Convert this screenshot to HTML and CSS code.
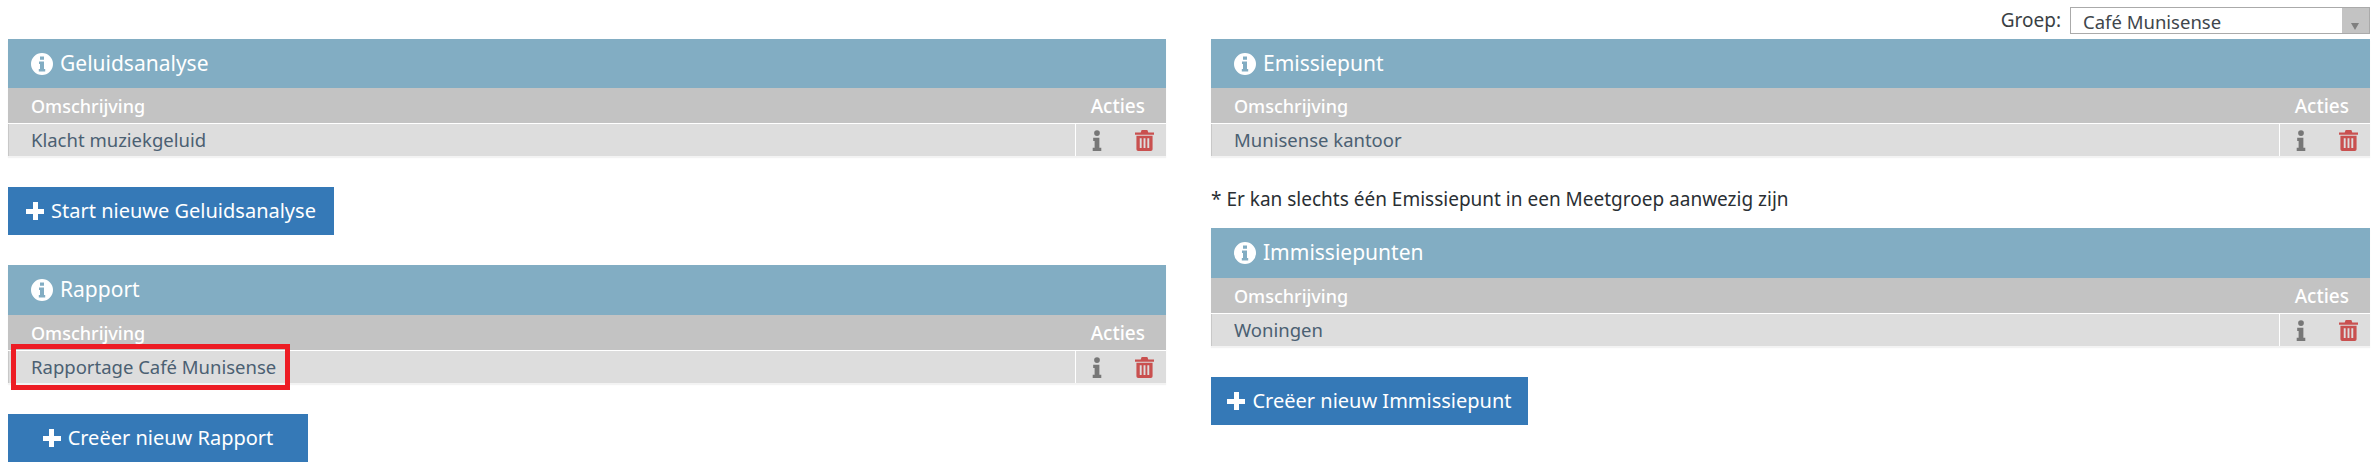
FILE: index.html
```html
<!DOCTYPE html>
<html lang="nl">
<head>
<meta charset="utf-8">
<title>Meetgroep</title>
<link rel="stylesheet" href="styles.css">
</head>
<body>
<svg class="defs" width="0" height="0" aria-hidden="true">
  <symbol id="i-circle" viewBox="0 0 24 24">
    <path fill-rule="evenodd" d="M12 1a11 11 0 1 0 0 22 11 11 0 0 0 0-22zM10 4.500h4v3.200h-4zM9 9.500h5v7.500h1.200v2.500H8.800v-2.500H10v-5H9z"/>
  </symbol>
  <symbol id="i-info" viewBox="0 0 10 22">
    <circle cx="5" cy="3.200" r="3"/>
    <path d="M1 8h6.500v10.500H9.500V22H.5v-3.500h2V11.500H1z"/>
  </symbol>
  <symbol id="i-trash" viewBox="0 0 20 22">
    <path fill-rule="evenodd" d="M7 0h6l1 2.500h6v2.500H0V2.500h6zM1.500 6h17v14.200a1.800 1.800 0 0 1-1.800 1.800H3.300a1.800 1.800 0 0 1-1.800-1.800zM5 8.500v10.500h2V8.500zM9 8.500v10.500h2V8.500zM13 8.500v10.500h2V8.500z"/>
  </symbol>
</svg>

<div class="topbar">
  <span class="topbar-label">Groep:</span>
  <div class="select">
    <span class="select-value">Café Munisense</span>
    <span class="select-arrow"></span>
  </div>
</div>

<main class="columns">
  <section class="column">
    <div class="panel">
      <h2 class="panel-title"><svg class="title-icon"><use href="#i-circle"/></svg>Geluidsanalyse</h2>
      <div class="head"><span class="head-name">Omschrijving</span><span class="head-actions">Acties</span></div>
      <div class="row">
        <span class="row-name">Klacht muziekgeluid</span>
        <span class="row-actions"><svg class="ico-info"><use href="#i-info"/></svg><svg class="ico-trash"><use href="#i-trash"/></svg></span>
      </div>
    </div>
    <a class="btn btn-first"><span class="plus"></span>Start nieuwe Geluidsanalyse</a>

    <div class="panel panel-second">
      <h2 class="panel-title panel-title-tall"><svg class="title-icon"><use href="#i-circle"/></svg>Rapport</h2>
      <div class="head"><span class="head-name">Omschrijving</span><span class="head-actions">Acties</span></div>
      <div class="row">
        <span class="row-name">Rapportage Café Munisense</span>
        <span class="row-actions"><svg class="ico-info"><use href="#i-info"/></svg><svg class="ico-trash"><use href="#i-trash"/></svg></span>
        <span class="highlight"></span>
      </div>
    </div>
    <a class="btn btn-report"><span class="plus"></span>Creëer nieuw Rapport</a>
  </section>

  <section class="column">
    <div class="panel">
      <h2 class="panel-title"><svg class="title-icon"><use href="#i-circle"/></svg>Emissiepunt</h2>
      <div class="head"><span class="head-name">Omschrijving</span><span class="head-actions">Acties</span></div>
      <div class="row">
        <span class="row-name">Munisense kantoor</span>
        <span class="row-actions"><svg class="ico-info"><use href="#i-info"/></svg><svg class="ico-trash"><use href="#i-trash"/></svg></span>
      </div>
    </div>
    <p class="note">* Er kan slechts één Emissiepunt in een Meetgroep aanwezig zijn</p>
    <div class="panel">
      <h2 class="panel-title panel-title-tall"><svg class="title-icon"><use href="#i-circle"/></svg>Immissiepunten</h2>
      <div class="head"><span class="head-name">Omschrijving</span><span class="head-actions">Acties</span></div>
      <div class="row">
        <span class="row-name">Woningen</span>
        <span class="row-actions"><svg class="ico-info"><use href="#i-info"/></svg><svg class="ico-trash"><use href="#i-trash"/></svg></span>
      </div>
    </div>
    <a class="btn btn-immissie"><span class="plus"></span>Creëer nieuw Immissiepunt</a>
  </section>
</main>
</body>
</html>
```
FILE: styles.css
```css
* { box-sizing: border-box; }
html, body { margin: 0; padding: 0; background: #fff; }
body {
  width: 2374px;
  height: 468px;
  overflow: hidden;
  font-family: "Noto Sans", "DejaVu Sans", sans-serif;
  font-size: 18.5px;
  color: #2f3b45;
}
.defs { position: absolute; }

.topbar {
  height: 39px;
  padding: 7px 4px 0 0;
  display: flex;
  justify-content: flex-end;
  align-items: flex-start;
}
.topbar-label { margin-right: 9px; font-size: 19px; line-height: 26px; height: 27px; color: #3a3f44; }
.select {
  width: 300px;
  height: 27px;
  border: 1px solid #aaa;
  display: flex;
  justify-content: space-between;
}
.select-value { padding-left: 12px; line-height: 27px; color: #40464c; }
.select-arrow {
  width: 27px;
  background: #c3c3c3;
  position: relative;
}
.select-arrow::after {
  content: "";
  position: absolute;
  left: 9px;
  top: 15px;
  border: 4px solid transparent;
  border-top: 7px solid #7f7f7f;
  border-bottom: 0;
}

.columns {
  display: grid;
  grid-template-columns: 1158px 1159px;
  column-gap: 45px;
  padding-left: 8px;
}
.column { display: flex; flex-direction: column; align-items: flex-start; }

.panel { width: 100%; box-shadow: 0 2px 1px #f3f3f3; }
.panel-second { margin-top: 30px; }
.panel-title {
  margin: 0;
  height: 49px;
  padding: 0 0 2px 22px;
  background: #82adc3;
  color: #fff;
  font-size: 21px;
  font-weight: 400;
  display: flex;
  align-items: center;
}
.panel-title-tall { height: 50px; }
.title-icon { width: 24px; height: 24px; fill: #fff; margin: 2px 6px 0 0; }

.head {
  height: 36px;
  border-bottom: 1px solid #fff;
  background: #c3c3c3;
  color: #fff;
  font-size: 18px;
  font-weight: 500;
  display: flex;
  justify-content: space-between;
  align-items: center;
  line-height: 34px;
  padding: 0 21px 0 23px;
}
.head-actions { font-size: 19px; }

.row {
  height: 32px;
  position: relative;
  display: flex;
  justify-content: space-between;
  background: #ddd;
  border-left: 1px solid #c8c8c8;
  color: #4b6072;
}
.row-name { padding-left: 22px; line-height: 31px; }
.row-actions {
  width: 91px;
  height: 32px;
  border-left: 1px solid #fff;
  padding: 6px 12px 0 16px;
  display: flex;
  justify-content: space-between;
  align-items: flex-start;
}
.ico-info { width: 10px; height: 21px; fill: #777; }
.ico-trash { width: 19px; height: 21px; fill: #c9504f; }

.highlight {
  position: absolute;
  left: 2px;
  top: -7px;
  width: 279px;
  height: 46px;
  border: 5px solid #ed1c24;
}

.btn {
  height: 48px;
  display: flex;
  align-items: center;
  justify-content: center;
  background: #3579b7;
  color: #fff;
  font-size: 20px;
  line-height: 48px;
}
.btn-first { width: 326px; margin-top: 31px; }
.btn-report { width: 300px; margin-top: 31px; }
.btn-immissie { width: 317px; margin-top: 31px; }
.plus {
  width: 18px;
  height: 18px;
  margin-right: 7px;
  background:
    linear-gradient(#fff, #fff) center / 18px 5px no-repeat,
    linear-gradient(#fff, #fff) center / 5px 18px no-repeat;
}

.note {
  margin: 30px 0 0;
  height: 42px;
  font-size: 19px;
  line-height: 26px;
  color: #2a2f34;
}
```
